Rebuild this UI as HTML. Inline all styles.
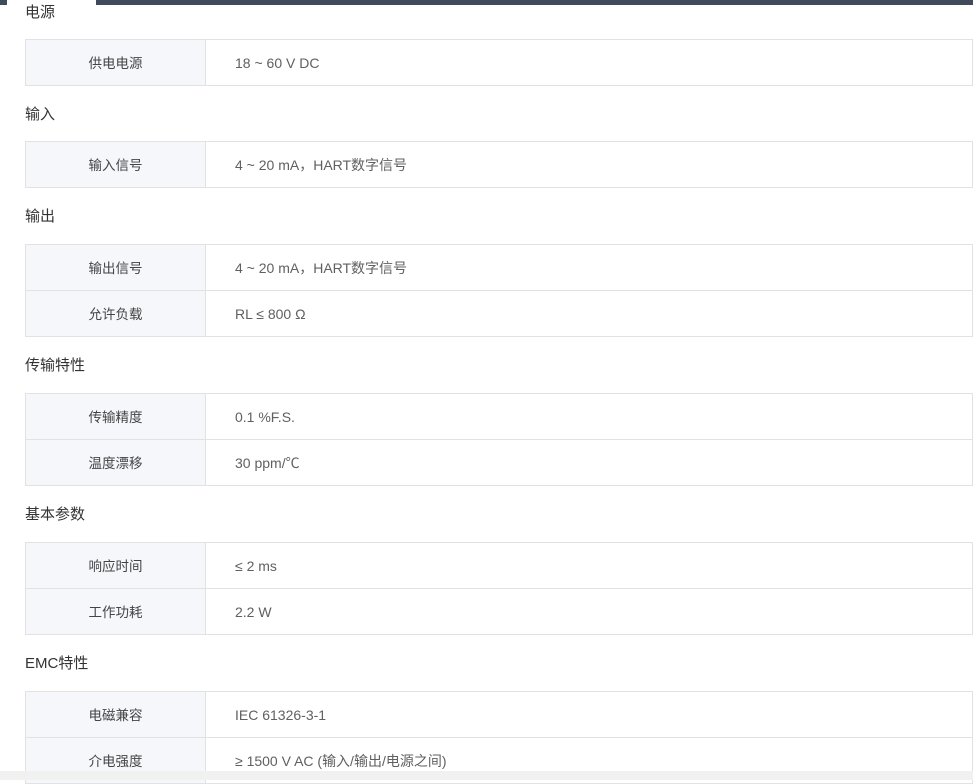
<!DOCTYPE html>
<html><head><meta charset="utf-8"><style>
body{margin:0;width:973px;height:780px;overflow:hidden;background:#fff;position:relative;font-family:"Liberation Sans","Noto Sans CJK SC",sans-serif;}
.bar{position:absolute;top:0;height:5px;background:#3f4a5d}
.h{position:absolute;left:25px;font-size:15px;color:#333;line-height:20px}
table{position:absolute;left:25px;width:948px;border-collapse:collapse;color:#555}
td{border:1px solid #e2e2e2;height:45px;padding:0;vertical-align:middle;line-height:20px}
td.l{width:179px;background:#f5f7fb;text-align:center;color:#444;font-size:13.5px}
td.l span{position:relative;top:1px}
td.v{padding-left:29px;font-size:14px;color:#606060}
</style></head><body>
<div class="bar" style="left:0;width:7px"></div>
<div class="bar" style="left:96px;width:877px"></div>
<div class="h" style="top:3px">电源</div>
<table style="top:39px"><tr><td class="l"><span>供电电源</span></td><td class="v">18 ~ 60 V DC</td></tr></table>
<div class="h" style="top:105px">输入</div>
<table style="top:141px"><tr><td class="l"><span>输入信号</span></td><td class="v">4 ~ 20 mA，HART数字信号</td></tr></table>
<div class="h" style="top:207px">输出</div>
<table style="top:244px"><tr><td class="l"><span>输出信号</span></td><td class="v">4 ~ 20 mA，HART数字信号</td></tr><tr><td class="l"><span>允许负载</span></td><td class="v">RL ≤ 800 Ω</td></tr></table>
<div class="h" style="top:356px">传输特性</div>
<table style="top:393px"><tr><td class="l"><span>传输精度</span></td><td class="v">0.1 %F.S.</td></tr><tr><td class="l"><span>温度漂移</span></td><td class="v">30 ppm/℃</td></tr></table>
<div class="h" style="top:505px">基本参数</div>
<table style="top:542px"><tr><td class="l"><span>响应时间</span></td><td class="v">≤ 2 ms</td></tr><tr><td class="l"><span>工作功耗</span></td><td class="v">2.2 W</td></tr></table>
<div class="h" style="top:654px">EMC特性</div>
<table style="top:691px"><tr><td class="l"><span>电磁兼容</span></td><td class="v">IEC 61326-3-1</td></tr><tr><td class="l"><span>介电强度</span></td><td class="v">≥ 1500 V AC (输入/输出/电源之间)</td></tr></table>
<div class="foot" style="position:absolute;left:0;top:771px;width:973px;height:9px;background:#f1f1f1"></div>
</body></html>
